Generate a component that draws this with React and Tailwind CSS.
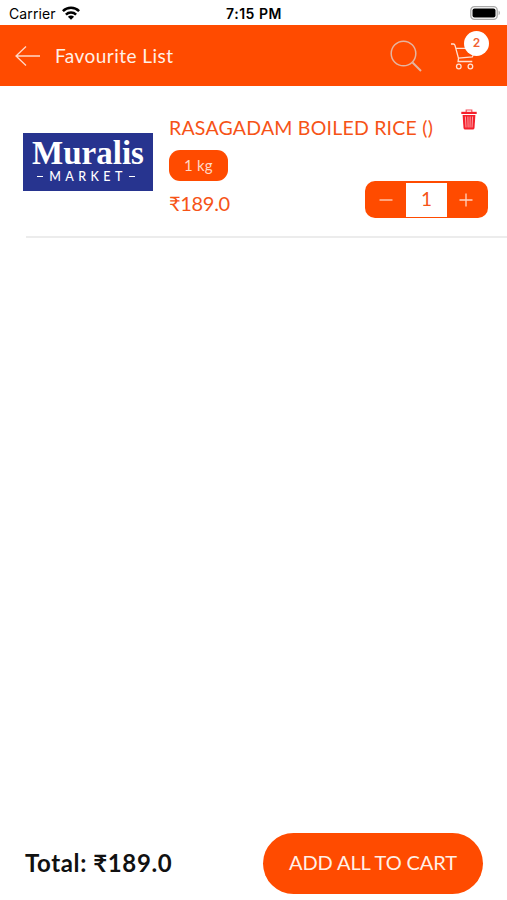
import React from "react";

function StatusBar() {
  return (
    <div className="grid h-[25px] grid-cols-3 items-center pl-[9px] pr-[8px] pt-[3px] font-['Inter',sans-serif] text-black">
      <div className="flex items-center gap-[6px] text-[14px] leading-[20px] tracking-[0.12px]">
        <span>Carrier</span>
        <svg width="18" height="14" viewBox="0 0 18 14" className="-mt-[2px]" fill="none" stroke="#000" strokeWidth="2.5">
          <path d="M0.9 5.2C5.4 0.7 12.6 0.7 17.1 5.2" />
          <path d="M3.9 8.6C6.7 5.8 11.3 5.8 14.1 8.6" />
          <path d="M9 13.8L5.9 10.7C7.6 9.1 10.4 9.1 12.1 10.7Z" fill="#000" stroke="none" />
        </svg>
      </div>
      <div className="whitespace-nowrap text-center text-[14px] font-semibold leading-[20px] tracking-[0.5px]">7:15 PM</div>
      <div className="flex justify-end">
        <svg width="31" height="14" viewBox="0 0 31 14" className="-mr-[2px] -mt-[2px]">
          <rect x="0.8" y="0.7" width="26.4" height="12.6" rx="3.6" fill="#fff" stroke="#aaa" strokeWidth="1.3" />
          <rect x="2.5" y="2.4" width="23" height="9.2" rx="2" fill="#000" />
          <path d="M28.6 4.8C30.3 5.4 30.3 8.6 28.6 9.2Z" fill="#aaa" />
        </svg>
      </div>
    </div>
  );
}

function Header() {
  return (
    <header className="flex h-[61px] items-center bg-[#ff4b00] pl-[15px] pr-[18px]">
      <svg width="26" height="22" viewBox="0 0 26 22" fill="none" stroke="#ffd9c8" strokeWidth="1.3">
        <path d="M25 11H1M11 1.5L1 11L11 20.5" />
      </svg>
      <h1 className="ml-[14px] whitespace-nowrap text-[19px] leading-[24px] tracking-[0.46px] text-[#fff0e7]">Favourite List</h1>
      <svg className="ml-auto" width="32" height="32" viewBox="0 0 32 32" fill="none" stroke="#e5b5a1" strokeWidth="1.5">
        <circle cx="13.5" cy="13.5" r="12.3" />
        <path d="M22.5 22.5L31 31" strokeWidth="1.9" />
      </svg>
      <div className="relative ml-[29px] h-[50px] w-[38px]">
        <svg className="mt-[12px]" width="28" height="28" viewBox="0 0 28 28" fill="none" stroke="#ffe1d3" strokeWidth="1.3">
          <path d="M0 1H2.4Q3.6 1 4 2.4L7.5 15.3L7.1 18.5H21.3M4.9 5.4H25L21.3 14L7.4 15.2" />
          <circle cx="7.8" cy="23.5" r="2.3" />
          <circle cx="19.4" cy="23.5" r="2.3" />
        </svg>
        <span className="absolute right-0 top-0 flex h-[25px] w-[25px] items-center justify-center rounded-full bg-white font-['Inter',sans-serif] text-[12px] font-semibold leading-none text-[#f16130]">2</span>
      </div>
    </header>
  );
}

function Logo() {
  return (
    <div className="mt-[47px] flex h-[58px] w-[130px] flex-col items-center bg-[#27348f] text-white">
      <div className="mt-[3px] whitespace-nowrap font-['Liberation_Serif',serif] text-[33px] font-bold leading-[34px]">Muralis</div>
      <div className="flex items-center gap-[6px] pr-[4px]">
        <span className="h-[1.5px] w-[6px] bg-white" />
        <span className="-mr-[4px] text-[12.5px] font-medium leading-[13px] tracking-[4.4px]">MARKET</span>
        <span className="h-[1.5px] w-[6px] bg-white" />
      </div>
    </div>
  );
}

function Stepper() {
  return (
    <div className="flex h-[37px] w-[123px] rounded-[10px] bg-[#ff4b00]">
      <button className="flex w-[41px] items-center justify-center" aria-label="Decrease">
        <svg width="14" height="14" viewBox="0 0 14 14" stroke="#ffd4c0" strokeWidth="1.3"><path d="M0.5 7H13.5" /></svg>
      </button>
      <span className="my-[1.5px] flex flex-1 items-center justify-center bg-white pb-[2px] text-[19px] leading-none">1</span>
      <button className="flex w-[41px] items-center justify-center pr-[3px]" aria-label="Increase">
        <svg width="14" height="14" viewBox="0 0 14 14" stroke="#ffd4c0" strokeWidth="1.3"><path d="M0.5 7H13.5M7 0.5V13.5" /></svg>
      </button>
    </div>
  );
}

function TrashIcon() {
  return (
    <svg width="16" height="21" viewBox="0 0 16 21" fill="none">
      <path d="M5.2 3V1H10.8V3" stroke="#f5535f" strokeWidth="1.2" />
      <path d="M0.3 2.8H15.7V5H0.3Z" fill="#f5202c" />
      <path d="M1.6 6.1H14.4L13.5 19Q13.3 20.5 11.8 20.5H4.2Q2.7 20.5 2.5 19Z" fill="#f5202c" />
      <path d="M4.4 7.5L5 18.5M6.9 7.5L7.1 18.5M9.2 7.5L9 18.5M11.6 7.5L11 18.5" stroke="#ffc4c8" strokeWidth="0.8" />
    </svg>
  );
}

function FavouriteItem() {
  return (
    <div className="flex h-[150px] pl-[23px] text-[#f65317]">
      <Logo />
      <div className="ml-[16px] flex flex-1 flex-col pr-[19px]">
        <div className="flex justify-between pr-[11px]">
          <h2 className="mt-[30px] whitespace-nowrap text-[19.5px] font-normal leading-[24px] tracking-[0.22px]">RASAGADAM BOILED RICE ()</h2>
          <div className="mt-[23px]"><TrashIcon /></div>
        </div>
        <span className="mt-[10px] flex h-[31px] w-[59px] items-center justify-center rounded-[11px] bg-[#ff4b00] pb-px text-[15px] leading-none tracking-[0.2px] text-[#ffd9c6]">1 kg</span>
        <div className="flex items-center justify-between">
          <span className="mt-[6px] text-[20px] leading-[24px] tracking-[-0.3px]">₹189.0</span>
          <Stepper />
        </div>
      </div>
    </div>
  );
}

export default function App() {
  return (
    <div className="flex h-[900px] w-[507px] flex-col overflow-hidden bg-white font-['Lato','Noto_Sans',sans-serif]">
      <StatusBar />
      <Header />
      <main className="flex-1">
        <FavouriteItem />
        <div className="ml-[26px] h-[2px] bg-[#ececec]" />
      </main>
      <footer className="flex h-[67px] items-start justify-between pl-[25px] pr-[24px]">
        <div className="mt-[17px] whitespace-nowrap text-[24px] font-bold leading-[26px] tracking-[0.6px] text-[#111]">Total: ₹189.0</div>
        <button className="h-[61px] w-[220px] whitespace-nowrap rounded-full bg-[#ff4b00] pb-[3px] text-[20px] leading-none tracking-[-0.1px] text-[#fff0e7]">ADD ALL TO CART</button>
      </footer>
    </div>
  );
}
